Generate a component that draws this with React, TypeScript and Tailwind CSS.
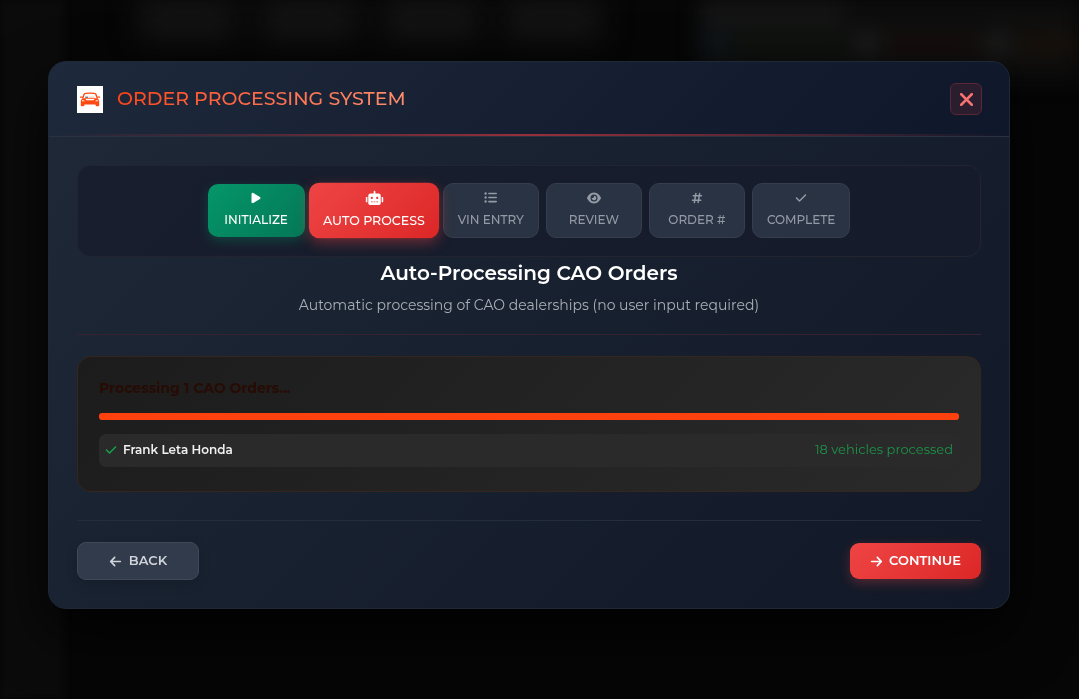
import type { ReactNode } from "react";
import { FaRobot } from "react-icons/fa";
import {
  FaArrowLeft,
  FaArrowRight,
  FaCheck,
  FaEye,
  FaHashtag,
  FaListUl,
  FaPlay,
  FaXmark,
} from "react-icons/fa6";

type StepState = "done" | "active" | "pending";

const stepStyles: Record<StepState, string> = {
  done: "min-w-[97px] px-4 h-[53px] text-white bg-linear-135 from-[#059669] to-[#047857] shadow-[0_4px_12px_rgba(5,150,105,0.3)]",
  active:
    "min-w-[124px] px-3 h-[53px] text-white bg-linear-135 from-[#ef4444] to-[#dc2626] scale-105 shadow-[0_4px_12px_rgba(239,68,68,0.4)]",
  pending:
    "min-w-24 px-[14px] h-[55px] text-[#949aa5] bg-[#2a3343] border border-[#343e4d]",
};

function Step({ icon, label, state }: { icon: ReactNode; label: string; state: StepState }) {
  return (
    <button
      type="button"
      className={`flex flex-col items-center gap-2 whitespace-nowrap rounded-[10px] pt-2 text-xs font-medium leading-4 ${stepStyles[state]}`}
    >
      <span className="flex h-3 items-center">{icon}</span>
      {label}
    </button>
  );
}

function CarLogo() {
  return (
    <svg viewBox="0 0 26 27" className="h-[27px] w-[26px] bg-white" aria-hidden="true">
      <path
        d="M5.6 12.500 7 8.600Q7.400 7.500 8.500 7.400Q13 6.800 17.500 7.400Q18.600 7.500 19 8.600L20.400 12.500"
        fill="none"
        stroke="#ff4a12"
        strokeWidth="1.400"
      />
      <path d="M3 11.200h2.600M20.400 11.200H23" stroke="#ff4a12" strokeWidth="1.300" />
      <path
        d="M5.500 12.300h15q1.700 1.200 1.700 3.200V19.200q0 1-1 1h-1.600q-1 0-1-1v-.7H7.400v.7q0 1-1 1H4.800q-1 0-1-1v-3.700Q3.800 13.500 5.500 12.300Z"
        fill="#ff4a12"
      />
      <path d="M5.300 13.900q2 .1 2.800 1.300H5.100ZM20.700 13.900q-2 .1-2.800 1.300h3Z" fill="#fff" />
      <path d="M8.500 13h9l-.8 1.300H9.300Z" fill="#fff" />
      <path d="M8.200 11.200h3" stroke="#333" strokeWidth="0.900" />
      <path d="M12 11.200h5.500" stroke="#ff9a78" strokeWidth="0.700" />
    </svg>
  );
}

function Backdrop() {
  return (
    <div aria-hidden="true" className="fixed inset-0 -z-10 flex overflow-hidden bg-[#060606]">
      <div className="w-16 bg-[#0b0b0b] blur-[3px]" />
      <div className="flex flex-1 gap-6 pl-[74px] blur-[14px]">
        <div className="h-10 w-[98px] bg-[#141414]" />
        <div className="h-10 w-[98px] bg-[#141414]" />
        <div className="h-10 w-[98px] bg-[#141414]" />
        <div className="h-10 w-[98px] bg-[#141414]" />
      </div>
      <div className="h-20 w-[380px] bg-[#0e0e0e] blur-[10px]">
        <div className="h-7 w-36 bg-[#151515]" />
        <div className="flex h-8 items-center justify-between">
          <div className="h-6 w-8 bg-[#0e1519]" />
          <div className="h-6 w-28 bg-[#0e120e]" />
          <div className="h-6 w-5 bg-[#1e1e1e]" />
          <div className="h-6 w-24 bg-[#150e0d]" />
          <div className="h-6 w-5 bg-[#1e1e1e]" />
          <div className="h-6 w-16 bg-[#17110b]" />
        </div>
      </div>
    </div>
  );
}

export default function App() {
  return (
    <div className="min-h-screen pt-[61px] pr-[69px] pb-12 pl-12 font-['Montserrat','Inter',sans-serif] text-white">
      <Backdrop />
      <div
        role="dialog"
        aria-labelledby="dialog-title"
        className="overflow-hidden rounded-[18px] border border-[#1e2836] bg-linear-135 from-[#1f2937] to-[#111827] shadow-[0_24px_60px_rgba(0,0,0,0.8)]"
      >
        <header className="border-b border-[#283342] bg-linear-135 from-[#1e293b] to-[#0f172a]">
          <div className="flex h-[72px] items-center justify-between pt-0.5 pr-[27px] pl-7">
            <div className="flex items-center gap-[14px]">
              <CarLogo />
              <h1
                id="dialog-title"
                className="bg-linear-135 from-[#ff410d] to-[#ff8f70] bg-clip-text text-[19px] font-medium leading-6 text-transparent"
              >
                ORDER PROCESSING SYSTEM
              </h1>
            </div>
            <button
              type="button"
              aria-label="Close"
              className="flex size-8 items-center justify-center rounded-md border border-[#5a2734] bg-[#2a1d2e] text-[#f87171]"
            >
              <FaXmark size={21} />
            </button>
          </div>
          <div className="h-0.5 bg-linear-to-r from-transparent via-[#963039] to-transparent" />
        </header>

        <main className="px-7 pt-7 pb-7">
          <nav
            aria-label="Order steps"
            className="flex h-[92px] items-center justify-center gap-[7px] rounded-[14px] border border-[#22242f] bg-linear-135 from-[#181e2d] to-[#151b2b] pb-0.5"
          >
            <Step icon={<FaPlay size={12} />} label="INITIALIZE" state="done" />
            <Step icon={<FaRobot size={17} />} label="AUTO PROCESS" state="active" />
            <Step icon={<FaListUl size={13} />} label="VIN ENTRY" state="pending" />
            <Step icon={<FaEye size={14} />} label="REVIEW" state="pending" />
            <Step icon={<FaHashtag size={12} />} label="ORDER #" state="pending" />
            <Step icon={<FaCheck size={12} />} label="COMPLETE" state="pending" />
          </nav>

          <section className="border-b border-[#35232e] pb-[19px] text-center">
            <h2 className="text-xl font-semibold leading-8">Auto-Processing CAO Orders</h2>
            <p className="mt-[6px] text-sm leading-5 text-[#a9aeb6]">
              Automatic processing of CAO dealerships (no user input required)
            </p>
          </section>

          <section className="mt-[21px] rounded-[14px] border border-[#35251f] bg-linear-135 from-[#1c1c1c] to-[#2a2a2a] px-[21px] pt-[19px] pb-6">
            <h3 id="progress-label" className="text-sm font-bold leading-6 text-[#270b04]">
              Processing 1 CAO Orders...
            </h3>
            <div
              role="progressbar"
              aria-labelledby="progress-label"
              aria-valuenow={100}
              className="mt-[13px] h-[7px] rounded-[3px] bg-[#ff410d]"
            />
            <div className="mt-[14px] flex h-[33px] items-center justify-between rounded-[7px] bg-[#2a2a2a] px-[6px] pb-0.5">
              <span className="flex items-center gap-[6px] text-xs font-semibold text-[#f0f0f0]">
                <FaCheck size={12} color="#16a34a" />
                Frank Leta Honda
              </span>
              <span className="text-[13px] text-[#1c9449]">18 vehicles processed</span>
            </div>
          </section>

          <footer className="mt-7 flex items-center justify-between border-t border-[#232e3d] pt-[21px]">
            <button
              type="button"
              className="flex h-[38px] w-[122px] items-center justify-center gap-[7px] rounded-[9px] border border-[#414958] bg-[#323b4b] text-[13px] font-semibold text-[#d1d5db] shadow-[0_4px_12px_rgba(0,0,0,0.15)]"
            >
              <FaArrowLeft size={13} />
              BACK
            </button>
            <button
              type="button"
              className="flex h-9 w-[131px] items-center justify-center gap-[6px] rounded-[9px] bg-linear-135 from-[#ef4444] to-[#dc2626] text-[13px] font-semibold text-white shadow-[0_4px_12px_rgba(239,68,68,0.3)]"
            >
              <FaArrowRight size={13} />
              CONTINUE
            </button>
          </footer>
        </main>
      </div>
    </div>
  );
}
